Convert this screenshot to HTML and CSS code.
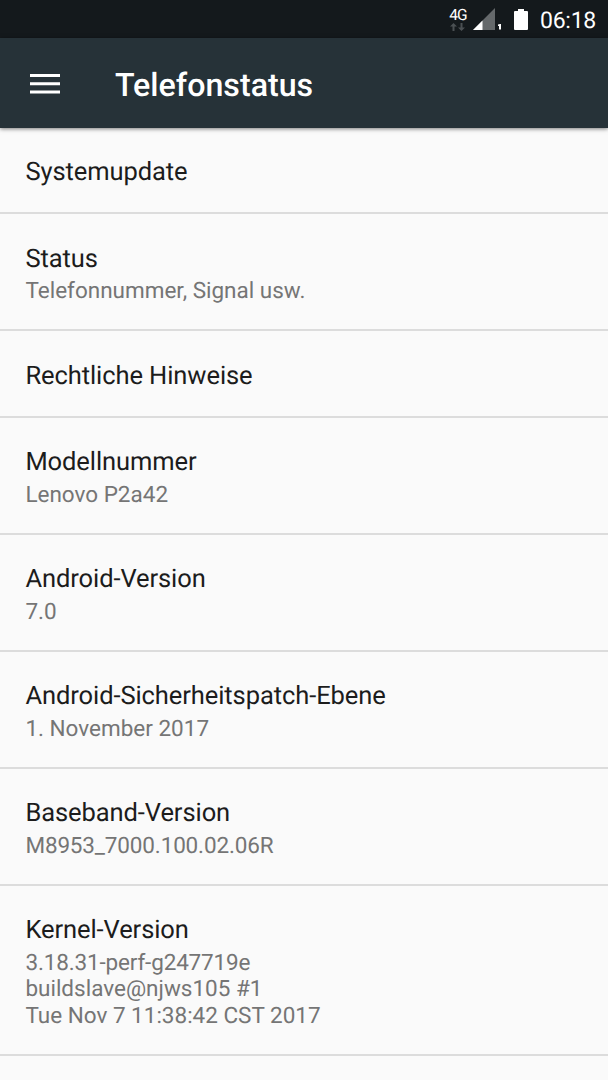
FILE: index.html
```html
<!DOCTYPE html>
<html lang="de">
<head>
<meta charset="utf-8">
<title>Telefonstatus</title>
<link rel="stylesheet" href="styles.css">
</head>
<body>
<div class="statusbar">
  <div class="network"><span class="network-type">4G</span>
    <svg class="traffic" width="15" height="8" viewBox="0 0 15 8"><path d="M3.500 0 7 3.500H4.500V8h-2V3.500H0zM11.500 8 15 4.500H12.500V0h-2v4.500H8z"/></svg>
  </div>
  <svg class="signal" width="31" height="23" viewBox="0 0 31 23"><path class="signal-empty" d="M22 0v22H0z"/><path class="signal-full" d="M9.500 12.500V22H0z"/><path class="signal-full" d="M25 16.500 27 16h1v5.500h-2V18h-1z"/></svg>
  <svg class="battery" width="14" height="21" viewBox="0 0 14 21"><path d="M4 0h6v2h3q1 0 1 1v17q0 1-1 1H1q-1 0-1-1V3q0-1 1-1h3z"/></svg>
  <span class="clock">06:18</span>
</div>
<header class="appbar">
  <svg class="menu" width="30" height="20" viewBox="0 0 30 20"><path d="M0 0h30v3H0zM0 8.250h30v3H0zM0 16.500h30v3H0z"/></svg>
  <h1 class="title">Telefonstatus</h1>
</header>
<main class="list">
  <section class="row"><h2 class="label">Systemupdate</h2></section>
  <section class="row"><h2 class="label">Status</h2><p class="summary">Telefonnummer, Signal usw.</p></section>
  <section class="row"><h2 class="label">Rechtliche Hinweise</h2></section>
  <section class="row"><h2 class="label">Modellnummer</h2><p class="summary">Lenovo P2a42</p></section>
  <section class="row"><h2 class="label">Android-Version</h2><p class="summary">7.0</p></section>
  <section class="row"><h2 class="label">Android-Sicherheitspatch-Ebene</h2><p class="summary">1. November 2017</p></section>
  <section class="row"><h2 class="label">Baseband-Version</h2><p class="summary build">M8953_7000.100.02.06R</p></section>
  <section class="row"><h2 class="label">Kernel-Version</h2><p class="summary"><span class="build">3.18.31-perf-g247719e</span><br>buildslave@njws105 #1<br>Tue Nov 7 11:38:42 CST 2017</p></section>
</main>
</body>
</html>
```

FILE: styles.css
```css
* { box-sizing: border-box; }
body { margin: 0; height: 1080px; overflow: hidden; background: #fafafa; font-family: Roboto, sans-serif; text-rendering: geometricPrecision; }
.statusbar { height: 38px; background: #14191c; display: flex; align-items: center; justify-content: flex-end; padding-right: 12px; color: #fff; }
.network { display: flex; flex-direction: column; align-items: center; width: 18px; margin-right: 6px; }
.network-type { font-size: 15.500px; line-height: 14px; letter-spacing: -0.8px; }
.traffic { margin-top: 1px; fill: #4b5053; }
.signal { margin-top: 1px; }
.signal-empty { fill: #65696b; }
.signal-full { fill: #fff; }
.battery { margin: 0 12px 0 10px; fill: #fff; }
.clock { font-size: 23px; line-height: 34px; padding-top: 4px; letter-spacing: -0.25px; }
.appbar { height: 89.500px; background: #263238; display: flex; align-items: center; padding-left: 30px; color: #fff; box-shadow: 0 1px 4px rgba(0,0,0,.5); }
.menu { fill: #fff; margin: 2.500px 55px 0 0; }
.title { margin: 4.500px 0 0; font-size: 32.200px; line-height: 40px; font-weight: 500; }
.row { padding: 29.625px 25px 24.500px; border-bottom: 2px solid #dcdcdc; }
.label { margin: 0; font-size: 25.500px; line-height: 30px; font-weight: 400; letter-spacing: -0.08px; color: #1c1c1c; }
.label:last-child { margin-bottom: 0.500px; }
.summary { margin: 4.375px 0 0; font-size: 22.500px; line-height: 26.500px; color: #757575; }
.label, .summary { padding-left: 0.400px; }
.build { letter-spacing: -0.15px; }
```
